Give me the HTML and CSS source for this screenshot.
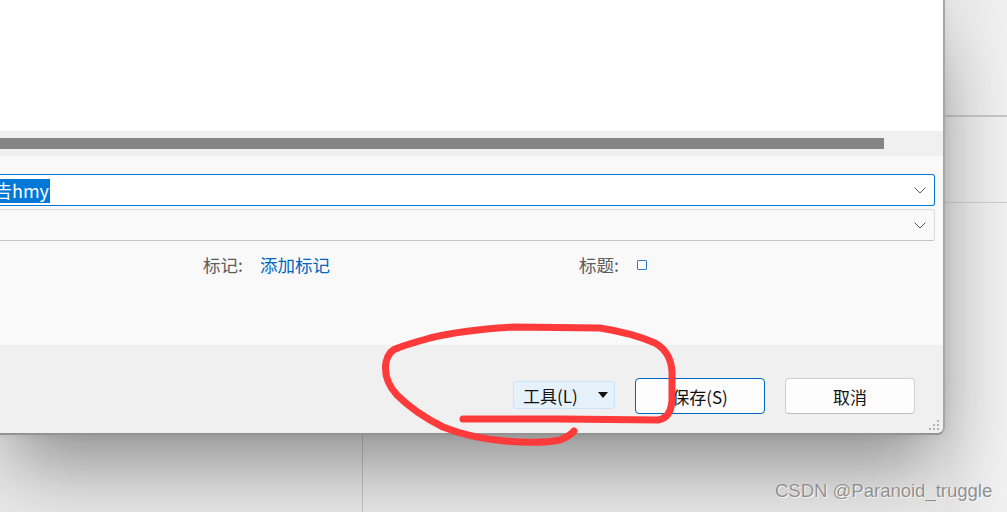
FILE: index.html
```html
<!DOCTYPE html>
<html lang="zh-CN">
<head>
<meta charset="utf-8">
<title>保存对话框</title>
<link rel="stylesheet" href="styles.css">
</head>
<body>
<div class="desk">
  <div class="dialog">
    <div class="view"></div>
    <div class="hscroll"><div class="thumb"></div></div>
    <div class="form">
      <div class="field active">
        <span class="value"><span class="sel">告hmy</span></span>
        <svg class="chev" width="12" height="7" viewBox="0 0 12 7"><path d="M0.5 0.5 L6 6 L11.5 0.5" fill="none" stroke="#5a5a5a" stroke-width="1"/></svg>
      </div>
      <div class="field">
        <span class="value"></span>
        <svg class="chev" width="12" height="7" viewBox="0 0 12 7"><path d="M0.5 0.5 L6 6 L11.5 0.5" fill="none" stroke="#5a5a5a" stroke-width="1"/></svg>
      </div>
      <div class="meta">
        <div class="meta-item"><span class="lbl">标记:</span><span class="link">添加标记</span></div>
        <div class="meta-item"><span class="lbl">标题:</span><span class="check"></span></div>
      </div>
    </div>
    <div class="footer">
      <div class="tools">工具(L)<span class="tri"></span></div>
      <div class="btn primary">保存(S)</div>
      <div class="btn">取消</div>
    </div>
    <svg class="grip" width="14" height="12" viewBox="0 0 14 12">
      <rect x="10" y="0" width="2" height="2" fill="#b4b4b4"/>
      <rect x="6" y="4" width="2" height="2" fill="#b4b4b4"/>
      <rect x="10" y="4" width="2" height="2" fill="#b4b4b4"/>
      <rect x="2" y="8" width="2" height="2" fill="#b4b4b4"/>
      <rect x="6" y="8" width="2" height="2" fill="#b4b4b4"/>
      <rect x="10" y="8" width="2" height="2" fill="#b4b4b4"/>
    </svg>
  </div>
</div>
<svg class="ink" width="1007" height="512" viewBox="0 0 1007 512">
  <path d="M463,419 L560,419 L658,420 Q671,418 672,400 L672,372 Q671,352 655,343 Q632,333 600,328 L513,327 Q462,330 430,338 Q405,345 398,348 Q389,350 386,362 Q383,380 397,395 Q415,413 443,427 Q470,438 505,441 Q540,444 560,440 Q570,436 574,431" fill="none" stroke="#ff3a3a" stroke-width="7" stroke-linecap="round" stroke-linejoin="round"/>
</svg>
<div class="mark">CSDN @Paranoid_truggle</div>
</body>
</html>
```

FILE: styles.css
```css
* { box-sizing: border-box; }
html, body { margin: 0; padding: 0; }
body {
  width: 1007px;
  height: 512px;
  overflow: hidden;
  position: relative;
  font-family: "Noto Sans CJK SC", "Microsoft YaHei", sans-serif;
  background:
    linear-gradient(#c4c4c4, #c4c4c4) 362px 434px / 1px 78px no-repeat,
    linear-gradient(#c6c6c6, #c6c6c6) 945px 115px / 62px 2px no-repeat,
    linear-gradient(#cdcdcd, #cdcdcd) 945px 202px / 62px 1px no-repeat,
    linear-gradient(to right, #e6e6e6, #f0f0f0 60px) 945px 0 / 62px 512px no-repeat,
    #e9e9e9;
}
.desk { width: 1007px; height: 512px; }
.dialog {
  position: relative;
  width: 945px;
  height: 435px;
  display: flex;
  flex-direction: column;
  background: #f0f0f0;
  border-right: 2px solid #a6a6a6;
  border-bottom: 2px solid #939393;
  border-radius: 0 0 8px 0;
  box-shadow: 0 40px 70px -12px rgba(0,0,0,0.4), 0 0 12px rgba(0,0,0,0.06);
  overflow: hidden;
}
.view { height: 131px; background: #ffffff; flex: none; }
.hscroll { height: 25px; background: #f0f0f0; padding-top: 7px; flex: none; }
.thumb { width: 884px; height: 11px; background: #858585; }
.form {
  height: 189px;
  flex: none;
  background: #f9f9f9;
  padding: 18px 8px 0 0;
  display: flex;
  flex-direction: column;
  gap: 3px;
}
.field {
  height: 32px;
  display: flex;
  align-items: center;
  background: #f9f9f9;
  border: 1px solid #dadada;
  border-bottom-color: #c4c4c4;
  border-left: none;
  border-radius: 0 3px 3px 0;
  padding-right: 8px;
}
.field.active { background: #ffffff; border: 1px solid #0078d4; border-left: none; }
.value { flex: 1; font-size: 18px; line-height: 24px; height: 24px; white-space: nowrap; }
.sel { display: inline-block; margin-left: -6px; padding-right: 1px; background: #0078d7; color: #fff; height: 24px; line-height: 23px; }
.chev { flex: none; }
.meta {
  display: grid;
  grid-template-columns: 376px auto;
  padding-left: 203px;
  margin-top: 9px;
  font-size: 17.5px;
  line-height: 24px;
}
.meta-item { display: flex; align-items: center; }
.lbl { color: #5c5c5c; width: 57px; }
.link { color: #0067c0; }
.meta-item .lbl + .check { margin-left: 1px; }
.check {
  width: 10px; height: 10px;
  border: 1.5px solid #2f7fd0;
  background: #fff;
  border-radius: 1px;
}
.footer {
  flex: 1;
  display: flex;
  justify-content: flex-end;
  align-items: flex-start;
  gap: 20px;
  padding: 33px 28px 0 0;
  background: #f0f0f0;
}
.tools {
  margin-top: 3px;
  width: 102px;
  height: 28px;
  background: #e5f1fb;
  border: 1px solid #cce4f7;
  border-radius: 3px;
  display: flex;
  align-items: center;
  padding-left: 9px;
  font-size: 17px;
  color: #111;
}
.tri {
  margin-left: auto;
  margin-right: 6px;
  width: 0; height: 0;
  border-left: 5px solid transparent;
  border-right: 5px solid transparent;
  border-top: 6px solid #111;
}
.btn {
  width: 130px;
  height: 36px;
  border: 1px solid #d0d0d0;
  border-bottom-color: #bdbdbd;
  border-radius: 4px;
  background: #fdfdfd;
  display: flex;
  align-items: center;
  justify-content: center;
  font-size: 17px;
  color: #111;
}
.btn.primary { border: 1px solid #0067c0; }
.grip { position: absolute; right: 2px; bottom: 1px; }
.ink { position: absolute; left: 0; top: 0; pointer-events: none; }
.mark {
  position: absolute;
  left: 775px;
  top: 479px;
  font-family: "Liberation Sans", Arial, sans-serif;
  font-size: 18.5px;
  line-height: 24px;
  color: #8e8e8e;
  text-shadow: 0 0 1px #fff, 1px 1px 0 #f6f6f6;
}
```
